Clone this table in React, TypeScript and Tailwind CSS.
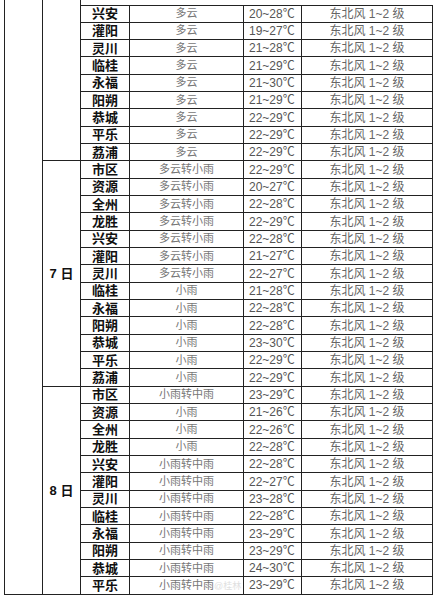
import React from 'react';

type Row = { city: string; weather: string; temp: string };

const sections: { date: string; rows: Row[] }[] = [
  {
    date: '',
    rows: [
      { city: '兴安', weather: '多云', temp: '20~28℃' },
      { city: '灌阳', weather: '多云', temp: '19~27℃' },
      { city: '灵川', weather: '多云', temp: '21~28℃' },
      { city: '临桂', weather: '多云', temp: '21~29℃' },
      { city: '永福', weather: '多云', temp: '21~30℃' },
      { city: '阳朔', weather: '多云', temp: '21~29℃' },
      { city: '恭城', weather: '多云', temp: '22~29℃' },
      { city: '平乐', weather: '多云', temp: '22~29℃' },
      { city: '荔浦', weather: '多云', temp: '22~29℃' },
    ],
  },
  {
    date: '7 日',
    rows: [
      { city: '市区', weather: '多云转小雨', temp: '22~29℃' },
      { city: '资源', weather: '多云转小雨', temp: '20~27℃' },
      { city: '全州', weather: '多云转小雨', temp: '22~28℃' },
      { city: '龙胜', weather: '多云转小雨', temp: '22~29℃' },
      { city: '兴安', weather: '多云转小雨', temp: '22~28℃' },
      { city: '灌阳', weather: '多云转小雨', temp: '21~27℃' },
      { city: '灵川', weather: '多云转小雨', temp: '22~27℃' },
      { city: '临桂', weather: '小雨', temp: '21~28℃' },
      { city: '永福', weather: '小雨', temp: '22~28℃' },
      { city: '阳朔', weather: '小雨', temp: '22~28℃' },
      { city: '恭城', weather: '小雨', temp: '23~30℃' },
      { city: '平乐', weather: '小雨', temp: '22~29℃' },
      { city: '荔浦', weather: '小雨', temp: '22~29℃' },
    ],
  },
  {
    date: '8 日',
    rows: [
      { city: '市区', weather: '小雨转中雨', temp: '23~29℃' },
      { city: '资源', weather: '小雨', temp: '21~26℃' },
      { city: '全州', weather: '小雨', temp: '22~26℃' },
      { city: '龙胜', weather: '小雨', temp: '22~28℃' },
      { city: '兴安', weather: '小雨转中雨', temp: '22~28℃' },
      { city: '灌阳', weather: '小雨转中雨', temp: '22~27℃' },
      { city: '灵川', weather: '小雨转中雨', temp: '23~28℃' },
      { city: '临桂', weather: '小雨转中雨', temp: '22~28℃' },
      { city: '永福', weather: '小雨转中雨', temp: '23~29℃' },
      { city: '阳朔', weather: '小雨转中雨', temp: '23~29℃' },
      { city: '恭城', weather: '小雨转中雨', temp: '24~30℃' },
      { city: '平乐', weather: '小雨转中雨', temp: '23~29℃' },
    ],
  },
];

const totalRows = sections.reduce((n, s) => n + s.rows.length, 0);
const cell = 'border border-[#222] p-0 leading-none';

export default function App() {
  return (
    <div
      className="relative w-[436px] h-[600px] overflow-hidden bg-white"
      style={{ fontFamily: '"Liberation Sans", "Noto Sans CJK SC", sans-serif' }}
    >
      <table className="ml-1 table-fixed border-collapse">
        <colgroup>
          <col className="w-[38px]" />
          <col className="w-[38px]" />
          <col className="w-[49px]" />
          <col className="w-[114px]" />
          <col className="w-[58px]" />
          <col className="w-[131px]" />
        </colgroup>
        <tbody>
          {/* the first two columns carry on above the crop */}
          <tr className="h-[5px]">
            <td rowSpan={totalRows + 1} className={`${cell} border-t-0`} />
            <td rowSpan={sections[0].rows.length + 1} className={`${cell} border-t-0`} />
            <td colSpan={4} className="p-0" />
          </tr>
          {sections.map((s, si) =>
            s.rows.map((r, ri) => (
              <tr key={`${si}-${ri}`} className="h-[17.33px]">
                {si > 0 && ri === 0 && (
                  <td
                    rowSpan={s.rows.length}
                    className={`${cell} text-center text-[13px] font-bold text-[#111]`}
                  >
                    {s.date}
                  </td>
                )}
                <td className={`${cell} text-center text-[13px] font-bold text-[#111]`}>{r.city}</td>
                <td className={`${cell} text-center text-[11px] text-[#777]`}>{r.weather}</td>
                <td className={`${cell} pl-[5px] text-left text-[12px] text-[#555]`}>{r.temp}</td>
                <td className={`${cell} text-center text-[12px] text-[#666]`}>东北风 1~2 级</td>
              </tr>
            ))
          )}
        </tbody>
      </table>
      {/* faint watermark over the last row */}
      <div className="absolute left-[214px] top-[580px] text-[9px] text-[#ccc] opacity-60">@桂林</div>
    </div>
  );
}
